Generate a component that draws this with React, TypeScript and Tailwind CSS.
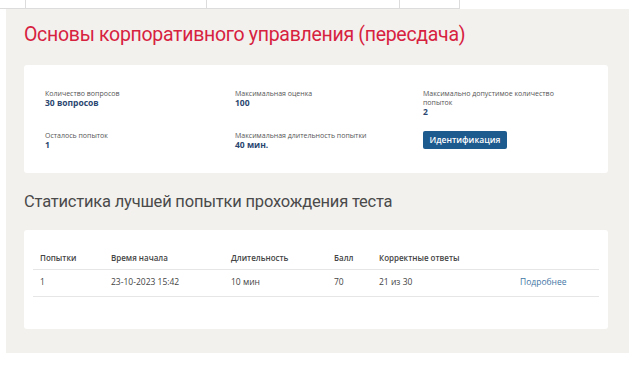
import React from "react";

const info = [
  { label: "Количество вопросов", value: "30 вопросов" },
  { label: "Максимальная оценка", value: "100" },
  { label: "Максимально допустимое количество попыток", value: "2" },
  { label: "Осталось попыток", value: "1" },
  { label: "Максимальная длительность попытки", value: "40 мин." },
];

const cols = ["Попытки", "Время начала", "Длительность", "Балл", "Корректные ответы", ""];
const rows = [["1", "23-10-2023 15:42", "10 мин", "70", "21 из 30"]];

function App() {
  return (
    <div className="w-[633px] h-[366px] bg-white overflow-hidden font-['Open_Sans',sans-serif]">
      <div className="flex h-[9px] w-[460px] border-b border-[#dcdcdc]">
        <div className="w-[26px] border-r border-[#dcdcdc]" />
        <div className="w-[181px] border-r border-[#dcdcdc]" />
        <div className="w-[193px] border-r border-[#dcdcdc]" />
        <div className="w-[60px] border-r border-[#dcdcdc]" />
      </div>

      <div className="ml-[6px] w-[623px] h-[344px] bg-[#f2f1ee] pl-[18px] pr-[21px] pt-[13px]">
        <h1 className="font-['Roboto',sans-serif] text-[19.5px] leading-[26px] text-[#d7223f] tracking-[-0.3px]">
          Основы корпоративного управления (пересдача)
        </h1>

        <div className="mt-[17px] h-[108px] bg-white rounded-[3px] pl-[21px] pt-[24px]">
          <div className="grid grid-cols-[190px_188px_160px] gap-y-[11px]">
            {info.map((it) => (
              <div key={it.label} className="h-[31px]">
                <div className="text-[7px] leading-[9px] text-[#555] w-[140px]">{it.label}</div>
                <div className="text-[8.5px] leading-[10px] font-bold text-[#2b4670]">{it.value}</div>
              </div>
            ))}
            <div className="flex items-start">
              <button className="block h-[18px] w-[84px] rounded-[2px] bg-[#1d5a8e] text-white text-[8.5px] font-semibold leading-[18px]">
                Идентификация
              </button>
            </div>
          </div>
        </div>

        <h2 className="mt-[18px] font-['Roboto',sans-serif] text-[16.5px] leading-[22px] text-[#4a4a4a] tracking-[-0.2px]">
          Статистика лучшей попытки прохождения теста
        </h2>

        <div className="mt-[17px] h-[99px] bg-white rounded-[3px] px-[9px] pt-[18px]">
          <table className="w-full text-[8.5px] text-[#444] border-collapse">
            <thead>
              <tr className="border-b border-[#e6e6e6]">
                {cols.map((c, i) => (
                  <th
                    key={i}
                    className={
                      "h-[21px] text-left font-semibold text-[8px] " +
                      (i === 0 ? "pl-[7px] w-[78px]" : i === 1 ? "w-[120px]" : i === 2 ? "w-[103px]" : i === 3 ? "w-[45px]" : i === 4 ? "w-[141px]" : "")
                    }
                  >
                    {c}
                  </th>
                ))}
              </tr>
            </thead>
            <tbody>
              {rows.map((r, k) => (
                <tr key={k} className="border-b border-[#e6e6e6]">
                  {r.map((v, i) => (
                    <td key={i} className={"h-[27px] " + (i === 0 ? "pl-[7px]" : "")}>
                      {v}
                    </td>
                  ))}
                  <td className="text-[#3f76a6]">Подробнее</td>
                </tr>
              ))}
            </tbody>
          </table>
        </div>
      </div>
    </div>
  );
}

export default App;
